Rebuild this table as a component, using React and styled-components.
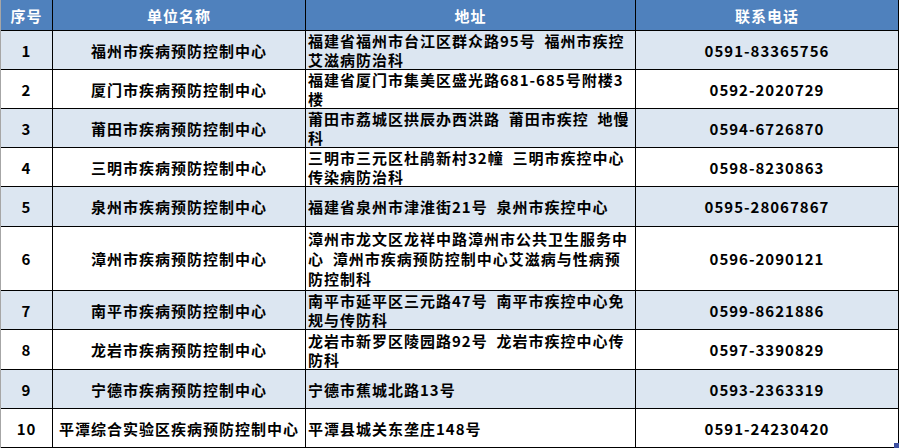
import React from 'react'
import styled, { createGlobalStyle } from 'styled-components'

const rows = [
    { no: '1', name: '福州市疾病预防控制中心', addr: ['福建省福州市台江区群众路95号  福州市疾控', '艾滋病防治科'], tel: '0591-83365756', h: 38 },
    { no: '2', name: '厦门市疾病预防控制中心', addr: ['福建省厦门市集美区盛光路681-685号附楼3', '楼'], tel: '0592-2020729', h: 38 },
    { no: '3', name: '莆田市疾病预防控制中心', addr: ['莆田市荔城区拱辰办西洪路  莆田市疾控  地慢', '科'], tel: '0594-6726870', h: 38 },
    { no: '4', name: '三明市疾病预防控制中心', addr: ['三明市三元区杜鹃新村32幢  三明市疾控中心', '传染病防治科'], tel: '0598-8230863', h: 38 },
    { no: '5', name: '泉州市疾病预防控制中心', addr: ['福建省泉州市津淮街21号  泉州市疾控中心'], tel: '0595-28067867', h: 39 },
    { no: '6', name: '漳州市疾病预防控制中心', addr: ['漳州市龙文区龙祥中路漳州市公共卫生服务中', '心  漳州市疾病预防控制中心艾滋病与性病预', '防控制科'], tel: '0596-2090121', h: 63 },
    { no: '7', name: '南平市疾病预防控制中心', addr: ['南平市延平区三元路47号  南平市疾控中心免', '规与传防科'], tel: '0599-8621886', h: 38 },
    { no: '8', name: '龙岩市疾病预防控制中心', addr: ['龙岩市新罗区陵园路92号  龙岩市疾控中心传', '防科'], tel: '0597-3390829', h: 39 },
    { no: '9', name: '宁德市疾病预防控制中心', addr: ['宁德市蕉城北路13号'], tel: '0593-2363319', h: 38 },
    { no: '10', name: '平潭综合实验区疾病预防控制中心', addr: ['平潭县城关东垄庄148号'], tel: '0591-24230420', h: 38 },
]

const App = () => {
    return (
        <>
            <GlobalStyle />
            <Sheet>
                <Row $h={30}>
                    <HeadCell>序号</HeadCell>
                    <HeadCell>单位名称</HeadCell>
                    <HeadCell>地址</HeadCell>
                    <HeadCell>联系电话</HeadCell>
                </Row>
                {rows.map((r, i) => {
                    const bg = i % 2 === 0 ? '#dce6f1' : '#ffffff'
                    return (
                        <Row key={r.no} $h={r.h}>
                            <Cell $bg={bg}>{r.no}</Cell>
                            <Cell $bg={bg}>{r.name}</Cell>
                            <Cell $bg={bg} $left>
                                <Lines $lh={r.addr.length > 2 ? 20 : 19}>
                                    {r.addr.map((line) => <div key={line}>{line}</div>)}
                                </Lines>
                            </Cell>
                            <Cell $bg={bg}>{r.tel}</Cell>
                        </Row>
                    )
                })}
                <FillHandle />
            </Sheet>
        </>
    )
}

const GlobalStyle = createGlobalStyle`
    body {
        margin: 0;
        background: #ffffff;
        font-family: "Noto Sans CJK SC", "Liberation Sans", sans-serif;
    }
`

const Sheet = styled.div`
    position: relative;
    width: 899px;
    box-sizing: border-box;
    display: flex;
    flex-direction: column;
    gap: 1px;
    background: #000000;
    border-left: 1px solid #a6a6a6;
    padding: 0 1px 1px 0;
`

const Row = styled.div`
    display: grid;
    grid-template-columns: 51px 252px 329px 262px;
    column-gap: 1px;
    height: ${(p) => p.$h}px;
`

const HeadCell = styled.div`
    background: #4f81bd;
    color: #ffffff;
    display: flex;
    align-items: center;
    justify-content: center;
    font-size: 15px;
    font-weight: 700;
    letter-spacing: 1px;
`

const Cell = styled.div`
    background: ${(p) => p.$bg};
    color: #000000;
    display: flex;
    align-items: center;
    justify-content: ${(p) => (p.$left ? 'flex-start' : 'center')};
    padding-left: ${(p) => (p.$left ? '2px' : '0')};
    font-size: 15px;
    font-weight: 700;
    letter-spacing: 1px;
    white-space: pre;
    overflow: hidden;
`

const Lines = styled.div`
    line-height: ${(p) => p.$lh}px;
`

const FillHandle = styled.div`
    position: absolute;
    right: 0;
    bottom: 0;
    width: 5px;
    height: 5px;
    background: #3c4fa0;
`

export default App
